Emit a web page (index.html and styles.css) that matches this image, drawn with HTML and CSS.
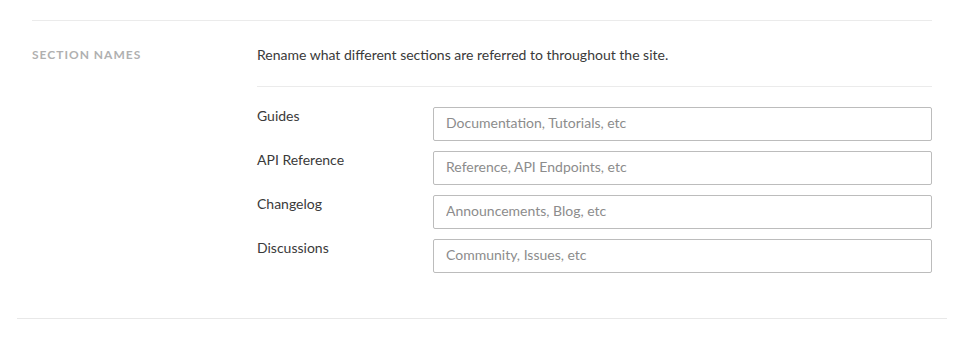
FILE: index.html
```html
<!DOCTYPE html>
<html lang="en">
<head>
    <meta charset="UTF-8">
    <meta name="viewport" content="width=device-width, initial-scale=1.0">
    <link rel="stylesheet" href="styles.css">
    <title>Section names</title>
</head>
<body>
    <div class="panel">
        <div class="setting">
            <h4 class="setting-title">Section Names</h4>
            <div class="setting-body">
                <p class="setting-desc">Rename what different sections are referred to throughout the site.</p>
                <div class="fields">
                    <div class="field">
                        <label for="guides">Guides</label>
                        <input type="text" id="guides" placeholder="Documentation, Tutorials, etc">
                    </div>
                    <div class="field">
                        <label for="reference">API Reference</label>
                        <input type="text" id="reference" placeholder="Reference, API Endpoints, etc">
                    </div>
                    <div class="field">
                        <label for="changelog">Changelog</label>
                        <input type="text" id="changelog" placeholder="Announcements, Blog, etc">
                    </div>
                    <div class="field">
                        <label for="discuss">Discussions</label>
                        <input type="text" id="discuss" placeholder="Community, Issues, etc">
                    </div>
                </div>
            </div>
        </div>
    </div>
</body>
</html>
```

FILE: styles.css
```css
*{
    box-sizing: border-box;
}

body{
    margin: 0;
    background-color: #fff;
    font-family: "Lato", "Helvetica Neue", sans-serif;
    color: #333;
}

.panel{
    margin: 0 30px 0 17px;
    padding: 20px 15px 45px;
    border-bottom: 1px solid #e8e8e8;
}

.setting{
    display: grid;
    grid-template-columns: 225px 1fr;
    border-top: 1px solid #ebebeb;
    padding-top: 25px;
}

.setting-title{
    margin: 0;
    font-size: 12px;
    line-height: 18px;
    font-weight: 700;
    letter-spacing: 1px;
    text-transform: uppercase;
    color: #b0b0b0;
}

.setting-desc{
    margin: 0;
    padding-bottom: 22px;
    font-size: 14px;
    line-height: 18px;
    color: #3a3a3a;
    border-bottom: 1px solid #ebebeb;
}

.fields{
    display: flex;
    flex-direction: column;
    gap: 10px;
    padding-top: 20px;
}

.field{
    display: grid;
    grid-template-columns: 176px 1fr;
    align-items: start;
}

label{
    font-size: 14px;
    line-height: 18px;
    color: #3a3a3a;
}

input{
    display: block;
    width: 100%;
    height: 34px;
    padding: 0 12px 3px;
    font-family: inherit;
    font-size: 14px;
    color: #333;
    border: 1px solid #bcbcbc;
    border-radius: 2px;
    outline: none;
}

input::placeholder{
    color: #8c8c8c;
}
```
